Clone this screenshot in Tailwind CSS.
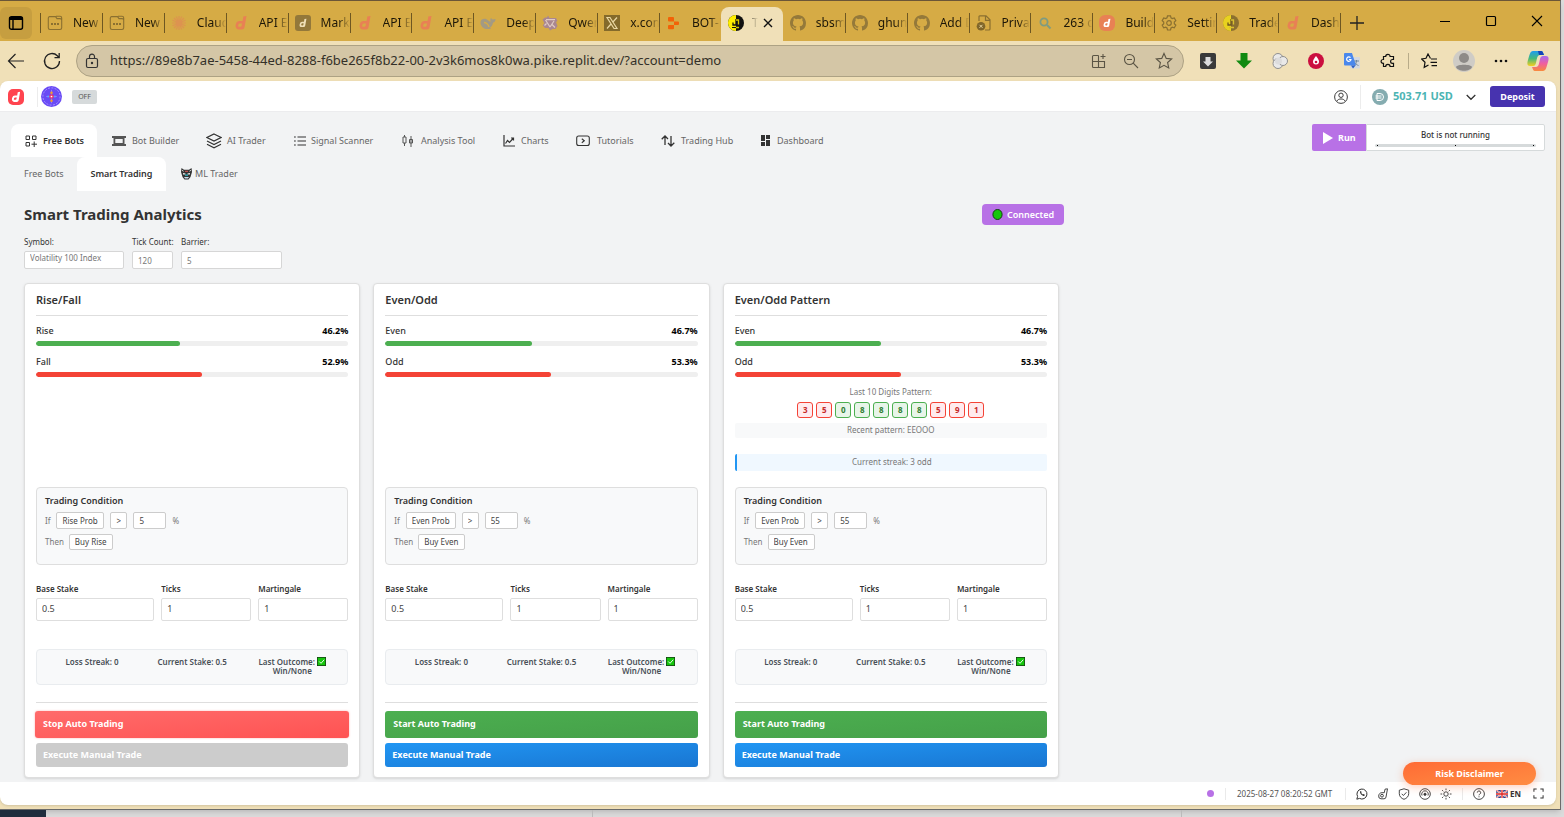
<!DOCTYPE html>
<html lang="en">
<head>
<meta charset="utf-8">
<title>Smart Trading Analytics</title>
<script src="https://cdn.jsdelivr.net/npm/@tailwindcss/browser@4"></script>
</head>
<body class="flex h-screen flex-col overflow-hidden bg-[#dcdcdc] pr-[3px] font-['Noto_Sans',sans-serif] text-[#333]">

<svg class="hidden">
  <symbol id="newtab" viewBox="0 0 16 16"><path d="M2.500 1.600h6l1.500 2h3a1.700 1.700 0 0 1 1.700 1.700v7.500a1.700 1.700 0 0 1-1.700 1.700H3a1.700 1.700 0 0 1-1.700-1.700V3A1.500 1.500 0 0 1 2.500 1.600zM9 1.300h4a1.700 1.700 0 0 1 1.700 1.700v3" fill="none" stroke="#8b7030" stroke-width="1.100"/><path d="M4 9h2M7 9h2M10 9h2" stroke="#8b7030" stroke-width="1.800"/></symbol>
  <symbol id="claude" viewBox="0 0 16 16"><path d="M8 1v14M1 8h14M3 3l10 10M13 3L3 13M5.300 1.500l5.400 13M10.700 1.500l-5.400 13M1.500 5.300l13 5.400M1.500 10.700l13-5.400" stroke="#dd9350" stroke-width="1.100"/></symbol>
  <symbol id="dglyph" viewBox="0 0 16 16"><path d="M13.500 1l-2 11.500a2.500 2.500 0 0 1-2.400 2H6a3.500 3.500 0 0 1-3.400-4.200l.3-1.300A3.800 3.800 0 0 1 6.600 6h3l.7-4.400zM9 8.500H7a1.800 1.800 0 0 0-1.700 1.400l-.1.600a1 1 0 0 0 1 1.300h1.300a1.200 1.200 0 0 0 1.100-1z" fill="currentColor" fill-rule="evenodd"/></symbol>
  <symbol id="dorange" viewBox="0 0 16 16"><use href="#dglyph" color="#e88154"/></symbol>
  <symbol id="dbrown" viewBox="0 0 16 16"><rect width="16" height="16" rx="3" fill="#93783a"/><use href="#dglyph" x="3" y="3" width="10" height="10" color="#f0e0b8"/></symbol>
  <symbol id="dround" viewBox="0 0 16 16"><rect width="16" height="16" rx="6" fill="#e88154"/><use href="#dglyph" x="3" y="3" width="10" height="10" color="#fff"/></symbol>
  <symbol id="dred" viewBox="0 0 16 16"><rect width="16" height="16" rx="5" fill="#ff444f"/><use href="#dglyph" x="2" y="2" width="12" height="12" color="#fff"/></symbol>
  <symbol id="whale" viewBox="0 0 16 16"><path d="M.5 7C1 4 4 3 6.500 4.200L9 6l1.500 1C10 5 10.500 3.500 11 3l1.500 1.500L15.500 4c0 2-1 3.500-2.500 3.800-.3 2-1.500 4-3 5l1 1.200H8C3.500 14.500.3 11 .5 7z" fill="#a39a83"/><path d="M4 7.500c2 0 4.500 2 5 4.500" stroke="#d6ab45" stroke-width="1.400" fill="none"/></symbol>
  <symbol id="qwen" viewBox="0 0 16 16"><path d="M6 .5l1.500 2.500H14l1.500 3-1.500 1 1.500 4-2 3h-3L8 15.500 6.500 13H3L.8 10.500 2.300 8 .5 4.500 3 2.500h2z" fill="#a98691"/><path d="M4 4.700h9M3.500 5l4.500 7M12 6l-4 6M2.500 10.500l2-2M10 9.500l3 3" stroke="#e0cbc4" stroke-width="1.200"/></symbol>
  <symbol id="xcom" viewBox="0 0 16 16"><path d="M0 0h16v16H0z" fill="#846a2b"/><path d="M3 2.500h3l7 11h-3zM13 2.500l-4.500 5M7 9l-4 4.500" fill="none" stroke="#ead7a2" stroke-width="1.200"/></symbol>
  <symbol id="replit" viewBox="0 0 16 16"><path d="M3 2h4a1 1 0 0 1 1 1v3.400H3a1 1 0 0 1-1-1V3a1 1 0 0 1 1-1zM8 6.400h4a1 1 0 0 1 1 1v1.500a1 1 0 0 1-1 1H8zM3 10h5v3.200a1 1 0 0 1-1 1H3a1 1 0 0 1-1-1V11a1 1 0 0 1 1-1z" fill="#f26207"/></symbol>
  <symbol id="yinyang" viewBox="0 0 16 16"><circle cx="8" cy="8" r="8" fill="#111"/><path d="M8 0a8 8 0 0 0 0 16z" fill="#ffef00"/><path d="M8 4v6H5V7.500" fill="none" stroke="#111" stroke-width="1.300"/><path d="M8 5h2.500v4.500M6 12.500h5" fill="none" stroke="#d9c900" stroke-width="1.300"/><path d="M4 12.500h4" stroke="#111"/></symbol>
  <symbol id="yinyang2" viewBox="0 0 16 16"><circle cx="8" cy="8" r="8" fill="#8b7030"/><path d="M8 0a8 8 0 0 0 0 16z" fill="#e8d21f"/><path d="M8 4v6H5V7.500" fill="none" stroke="#6d5620" stroke-width="1.300"/><path d="M8 5h2.500v4.500M6 12.500h5" fill="none" stroke="#d9c030" stroke-width="1.300"/></symbol>
  <symbol id="github" viewBox="0 0 16 16"><path d="M8 0C3.580 0 0 3.580 0 8c0 3.540 2.290 6.530 5.470 7.590.4.070.55-.17.55-.38v-1.490c-2.230.48-2.690-.95-2.690-.95-.36-.92-.89-1.170-.89-1.170-.73-.5.06-.49.06-.49.8.06 1.230.83 1.230.83.71 1.220 1.870.87 2.330.66.07-.51.28-.87.5-1.070-1.780-.2-3.640-.89-3.640-3.950 0-.87.310-1.590.82-2.150-.08-.2-.36-1.020.08-2.120 0 0 .67-.21 2.200.82a7.600 7.600 0 0 1 4 0c1.530-1.040 2.200-.82 2.200-.82.44 1.100.16 1.920.08 2.120.51.56.82 1.270.82 2.150 0 3.070-1.870 3.750-3.650 3.950.29.250.54.73.54 1.480v2.200c0 .21.15.46.55.38A8 8 0 0 0 16 8c0-4.420-3.580-8-8-8z" fill="#94793a"/></symbol>
  <symbol id="private" viewBox="0 0 16 16"><path d="M3 6V1.500A1 1 0 0 1 4 .8h6l4 4V14a1 1 0 0 1-1 1H9M9.500 1v4.300H14" fill="none" stroke="#8b7030" stroke-width="1.200"/><circle cx="5" cy="11.300" r="4.300" fill="#80662a"/><path d="M3.500 9.800l3 3M6.500 9.800l-3 3" stroke="#e8d6a0"/></symbol>
  <symbol id="mag" viewBox="0 0 16 16"><circle cx="7" cy="7" r="3.600" fill="none" stroke="#7f9b80" stroke-width="1.800"/><path d="M10 10l3.500 3.500" stroke="#7f9b80" stroke-width="2"/></symbol>
  <symbol id="gear" viewBox="0 0 16 16"><path d="M6.500.8h3l.5 2 1.300.8 2-.6 1.500 2.600-1.500 1.400v1.800l1.500 1.400-1.500 2.600-2-.6-1.300.8-.5 2h-3l-.5-2-1.300-.8-2 .6-1.500-2.600 1.500-1.400V7L1.200 5.600 2.700 3l2 .6L6 2.800z" fill="none" stroke="#8b7030" stroke-width="1.200"/><circle cx="8" cy="8" r="2.300" fill="none" stroke="#8b7030" stroke-width="1.200"/></symbol>
</svg>

<div class="flex min-h-0 flex-1 flex-col border-t border-r border-b border-[#6b6b6b] border-t-[#6b5637] bg-[#f0e0b8] shadow-md">
  <!-- tab strip -->
  <div class="flex h-10 shrink-0 bg-[#d6ab45] text-[12px] text-[#1d1708]">
    <button aria-label="Tab actions" class="mt-[6px] flex h-8 w-8 shrink-0 items-center justify-center rounded-md bg-[#c69e40]"><svg class="size-4" viewBox="0 0 16 16" fill="none" stroke="#000" stroke-width="1.400"><rect x="1.500" y="1.700" width="13" height="12.600" rx="2"/><path d="M1.500 3.500h13" stroke-width="3"/><path d="M5 4v10"/></svg></button>
    <div class="w-2 shrink-0"></div>
    <div id="tabs" class="grid min-w-0 flex-1 auto-cols-[minmax(0,1fr)] grid-flow-col"></div>
    <div class="flex w-[220px] shrink-0 items-center">
      <div class="mt-1 h-5 w-px bg-[#6e5722]"></div>
      <button aria-label="New tab" class="ml-[6px] mt-[3px]"><svg class="size-5" viewBox="0 0 20 20" stroke="#222" stroke-width="1.300"><path d="M3 10h14M10 3v14"/></svg></button>
      <div class="ml-auto flex items-center gap-[30px] pr-[15px]">
        <button aria-label="Minimize"><svg class="size-4" viewBox="0 0 16 16" stroke="#000" stroke-width="1"><path d="M3 8.500h10"/></svg></button>
        <button aria-label="Maximize"><svg class="size-4" viewBox="0 0 16 16" fill="none" stroke="#000" stroke-width="1.200"><rect x="3.500" y="3.500" width="9" height="9" rx="1"/></svg></button>
        <button aria-label="Close window"><svg class="size-4" viewBox="0 0 16 16" stroke="#000" stroke-width="1.100"><path d="M3 3l10 10M13 3L3 13"/></svg></button>
      </div>
    </div>
  </div>

  <!-- address row -->
  <div class="flex h-10 shrink-0 items-center">
    <button aria-label="Back" class="ml-1.5"><svg class="size-5" viewBox="0 0 20 20" fill="none" stroke="#222" stroke-width="1.200"><path d="M18 10H2.500M9.500 3l-7 7 7 7"/></svg></button>
    <button aria-label="Reload" class="ml-4"><svg class="size-5" viewBox="0 0 20 20" fill="none" stroke="#222" stroke-width="1.300"><path d="M17.500 10a7.500 7.500 0 1 1-2.200-5.300L17 6.500M17.200 2v4.700h-4.700"/></svg></button>
    <div class="ml-3.5 flex h-8 min-w-0 flex-1 items-center rounded-full border border-[#ada284] bg-[#d4c6a6] pr-2.5 pl-[7px]">
      <svg class="size-4" viewBox="0 0 16 16" fill="none" stroke="#333" stroke-width="1.200"><rect x="2.500" y="5.500" width="11" height="9" rx="1.500"/><path d="M5.500 5.500V3.600a2.500 2.500 0 0 1 5 0v1.900"/><circle cx="8" cy="10" r=".6" fill="#333"/></svg>
      <input aria-label="Address" value="https://89e8b7ae-5458-44ed-8288-f6be265f8b22-00-2v3k6mos8k0wa.pike.replit.dev/?account=demo" class="ml-2.5 min-w-0 flex-1 bg-transparent text-[13px] text-[#333028] outline-none">
      <div class="flex items-center gap-4 text-[#5b5545]">
        <svg class="size-4" viewBox="0 0 16 16" fill="none" stroke="currentColor" stroke-width="1.100"><path d="M7.500 2.500H2.500a1 1 0 0 0-1 1v10a1 1 0 0 0 1 1h11v-6h-12M7.500 2.500v12M12 1v5M9.500 3.500h5"/></svg>
        <svg class="size-4" viewBox="0 0 16 16" fill="none" stroke="currentColor" stroke-width="1.100"><circle cx="6.500" cy="6.500" r="5"/><path d="M10.200 10.200l4.800 4.800M4 6.500h5"/></svg>
        <svg class="size-[18px]" viewBox="0 0 16 16" fill="none" stroke="currentColor" stroke-width="1"><path d="M8 1.300l2 4.400 4.800.5-3.600 3.200 1 4.800L8 11.800l-4.200 2.400 1-4.800L1.200 6.200 6 5.700z"/></svg>
      </div>
    </div>
    <div class="ml-4 flex shrink-0 items-center gap-5">
      <svg class="size-4" viewBox="0 0 16 16"><rect width="16" height="16" rx="2" fill="#3a3a3a"/><path d="M5.500 4h5v4.500H13L8 13.500 3 8.500h2.500z" fill="#ddd"/></svg>
      <svg class="size-4" viewBox="0 0 16 16"><path d="M4.500 0h7v7.500H16l-8 8-8-8h4.500z" fill="#118a11"/></svg>
      <svg class="size-4" viewBox="0 0 16 16" stroke="#8f8f8f"><g fill="#e9e9e9"><circle cx="6" cy="5.500" r="5"/><circle cx="6" cy="10.500" r="5"/><circle cx="11" cy="8" r="4.500"/></g><circle cx="6.500" cy="8" r="3.500" fill="#dcdcdc" stroke="none"/></svg>
      <svg class="size-4" viewBox="0 0 16 16"><circle cx="8" cy="8" r="8" fill="#cb0f3f"/><path d="M8 3c2 2.500 3 4 3 5.600a3 3 0 0 1-6 0C5 7 6 5.500 8 3z" fill="#fff"/><circle cx="8" cy="9" r="1.300" fill="#cb0f3f"/></svg>
      <svg class="size-4" viewBox="0 0 16 16"><rect x="6" y="4" width="10" height="11.500" rx="1" fill="#d5d9de"/><path d="M10 8h5M12.500 7v1c0 2-1 3.500-2.500 4.500M11 9.500c.5 1.500 2 2.500 3.500 3" stroke="#70889e" fill="none"/><path d="M1 0h7l4 12.500H1a1 1 0 0 1-1-1V1a1 1 0 0 1 1-1z" fill="#4a88ec"/><path d="M7 12.500h4.500L9 15.500z" fill="#2c5fc4"/><path d="M6.500 4.700A2.200 2.200 0 1 0 7 6.500H5" fill="none" stroke="#fff" stroke-width="1.200"/></svg>
      <svg class="size-4" viewBox="0 0 16 16" fill="none" stroke="#111" stroke-width="1.200"><path d="M3.500 3.500h2.200a2.200 2.200 0 0 1 4.400 0h3.400v3h-1a1.900 1.900 0 0 0 0 3.800h1v3.200h-3.400a2.200 2.200 0 0 0-4.400 0H3.500v-3.200H3a1.900 1.900 0 0 1 0-3.800h.5z"/></svg>
    </div>
    <div class="mx-3 h-4 w-px bg-[#b8ab89]"></div>
    <div class="flex shrink-0 items-center gap-4 pr-[11px]">
      <svg class="size-4" viewBox="0 0 16 16" fill="none" stroke="#111" stroke-width="1.200"><path d="M9.500 5.500L7 1 5 5.300.7 6 4 9.300l-.8 5L7.500 12M10 6h6M9.500 9.300H16M10.500 12.600H16"/></svg>
      <svg class="size-[22px]" viewBox="0 0 22 22"><circle cx="11" cy="11" r="11" fill="#cfccc6"/><circle cx="11" cy="8" r="5" fill="#8e8b88"/><path d="M3 17c1-3 15-3 16 0-2 5-14 5-16 0z" fill="#8e8b88"/></svg>
      <svg class="mx-0.5 size-4" viewBox="0 0 16 16" fill="#111"><circle cx="3" cy="8" r="1.300"/><circle cx="8" cy="8" r="1.300"/><circle cx="13" cy="8" r="1.300"/></svg>
      <svg class="size-[22px]" viewBox="0 0 22 22"><defs><linearGradient id="cg" x1="0" y1="0" x2="0" y2="1"><stop offset="0" stop-color="#1f9cf0"/><stop offset=".5" stop-color="#45b97c"/><stop offset="1" stop-color="#f5cf1d"/></linearGradient><linearGradient id="ch" x1="0" y1="0" x2="0" y2="1"><stop offset="0" stop-color="#a66cf0"/><stop offset=".5" stop-color="#ef5fa0"/><stop offset="1" stop-color="#f98a3c"/></linearGradient></defs><path d="M6 1h8c2 0 2 2 3 4h-4c-3 0-3 4-4 8-1 3-2 3-4 3H3c-3 0-3-3-2-6C2.500 5 3 1 6 1z" fill="url(#cg)"/><path d="M11 1h3c2 0 2 2 3 4h-5z" fill="#1544b8"/><path d="M16 21H8c-2 0-2-2-3-4h4c3 0 3-4 4-8 1-3 2-3 4-3h2c3 0 3 3 2 6-1.500 5-2 9-5 9z" fill="url(#ch)"/></svg>
    </div>
  </div>

  <!-- page -->
  <div class="mr-1 mb-1 flex min-h-0 flex-1 flex-col overflow-hidden rounded-lg bg-white shadow">
    <header class="flex h-[31px] shrink-0 items-center border-b border-[#ececee] pt-px pr-[11px] pl-2">
      <svg class="size-4"><use href="#dred"/></svg>
      <div class="mr-[3px] ml-[13px] h-5 w-px bg-[#ececec]"></div>
      <svg class="size-[21px]" viewBox="0 0 22 22"><circle cx="11" cy="11" r="11" fill="#6a4bf5"/><circle cx="11" cy="11" r="9" fill="none" stroke="#b5a8ff" stroke-dasharray="2 1.500" stroke-width=".8"/><path d="M11 4v14M5.500 11h11" stroke="#9c8cff" stroke-width=".8"/><circle cx="11" cy="7" r="1.300" fill="#f59b2b"/><circle cx="11" cy="15.500" r="1.300" fill="#f59b2b"/><circle cx="7.500" cy="11" r="1" fill="#55a9ff"/><circle cx="14.500" cy="11" r="1" fill="#55a9ff"/><circle cx="11" cy="11" r="2.300" fill="#e9376f"/><circle cx="11" cy="11" r=".9" fill="#fff"/></svg>
      <button class="ml-2.5 h-3.5 w-[25px] rounded-xs bg-[#d6dadb] text-[7px] leading-none text-[#555]">OFF</button>
      <div class="ml-auto flex items-center">
        <svg class="size-3.5" viewBox="0 0 16 16" fill="none" stroke="#333" stroke-width="1.100"><circle cx="8" cy="8" r="7.300"/><circle cx="8" cy="6" r="2.500"/><path d="M3.500 12.500c1-3 8-3 9 0"/></svg>
        <div class="mr-[11px] ml-3 h-6 w-px bg-[#ececec]"></div>
        <svg class="size-4" viewBox="0 0 16 16"><circle cx="8" cy="8" r="8" fill="#85acb0"/><path d="M5 4.500h3a3.500 3.500 0 0 1 0 7H5zM3.500 7h6M3.500 9h6" fill="none" stroke="#fff" stroke-width="1"/></svg>
        <span class="ml-[5px] w-[61px] text-[11px] font-bold whitespace-nowrap text-[#4bb4b3]">503.71 USD</span>
        <button aria-label="Accounts" class="mx-3"><svg class="size-2.5" viewBox="0 0 10 10" fill="none" stroke="#333" stroke-width="1.300"><path d="M.7 3L5 7.300 9.300 3"/></svg></button>
        <button class="ml-0.5 h-[21px] w-[55px] rounded-[3px] bg-[#4733af] text-[9px] font-bold text-white">Deposit</button>
      </div>
    </header>

    <main class="flex min-h-0 flex-1 flex-col overflow-hidden bg-[#f2f3f4] pt-3 text-[9px]">
      <div class="flex shrink-0 items-start pr-[11px] pl-[11px]">
        <nav class="flex flex-1">
          <a href="#" class="flex h-[33px] w-[86px] items-center gap-[6px] rounded-t-lg bg-white pl-3.5 font-semibold whitespace-nowrap"><svg class="size-3" viewBox="0 0 12 12" fill="none" stroke="#333" stroke-width="1"><path d="M1 1h3.500v3.500H1zM7.500 1H11v3.500H7.500zM1 7.500h3.500V11H1zM9.200 6.500V12M6.500 9.200H12"/></svg>Free Bots</a>
          <a href="#" class="flex h-[33px] w-[96px] items-center gap-[6px] pl-[15px] whitespace-nowrap text-[#666]"><svg class="h-3 w-3.5" viewBox="0 0 14 12" fill="#555"><path d="M0 1h14v2h-1.500v6H14v2H0V9h1.500V3H0zm3.300 3v4h7.400V4z" fill-rule="evenodd"/></svg>Bot Builder</a>
          <a href="#" class="flex h-[33px] w-[87px] items-center gap-[5px] pl-[13px] whitespace-nowrap text-[#666]"><svg class="size-4" viewBox="0 0 16 16" fill="none" stroke="#333" stroke-width="1.200"><path d="M8 1l7 3.500L8 8 1 4.500zM1 8l7 3.500L15 8M1 11.300l7 3.500 7-3.500"/></svg>AI Trader</a>
          <a href="#" class="flex h-[33px] w-[108px] items-center gap-[5px] pl-3.5 whitespace-nowrap text-[#666]"><svg class="size-3" viewBox="0 0 12 12" stroke="#333" stroke-width="1.200"><path d="M0 2h1.800M0 6h1.800M0 10h1.800M3.500 2H12M3.500 6H12M3.500 10H12"/></svg>Signal Scanner</a>
          <a href="#" class="flex h-[33px] w-[101px] items-center gap-[7px] pl-3.5 whitespace-nowrap text-[#666]"><svg class="size-3" viewBox="0 0 12 12" fill="none" stroke="#555" stroke-width="1"><path d="M2.500 0v2M2.500 8v3M1 2h3v6H1zM9 1v3M9 8v4M7.500 4.500h3v3.500h-3zM9 4v4"/></svg>Analysis Tool</a>
          <a href="#" class="flex h-[33px] w-[73px] items-center gap-[6px] pl-3.5 whitespace-nowrap text-[#666]"><svg class="size-3" viewBox="0 0 12 12" fill="none" stroke="#333" stroke-width="1.200"><path d="M1 0v11h11M2.500 8.500l2-3 2 2L10.500 3M8 3h2.500v2.500"/></svg>Charts</a>
          <a href="#" class="flex h-[33px] w-[85px] items-center gap-[7px] pl-3.5 whitespace-nowrap text-[#666]"><svg class="h-3 w-3.5" viewBox="0 0 14 12" fill="none" stroke="#333" stroke-width="1.100"><rect x=".7" y="1" width="12.600" height="9.500" rx="2"/><path d="M5.800 3.800L8.300 5.700 5.800 7.700" /></svg>Tutorials</a>
          <a href="#" class="flex h-[33px] w-[100px] items-center gap-[6px] pl-3.5 whitespace-nowrap text-[#666]"><svg class="h-3 w-3.5" viewBox="0 0 14 12" fill="none" stroke="#333" stroke-width="1.300"><path d="M4 10V1M.7 4.200L4 1l3 3M10 1v10M7 8l3 3 3.300-3.200"/></svg>Trading Hub</a>
          <a href="#" class="flex h-[33px] w-[90px] items-center gap-[6px] pl-[13px] whitespace-nowrap text-[#666]"><svg class="size-[11px]" viewBox="0 0 11 11" fill="#333"><path d="M1 0h4v6H1zM1 7h4v4H1zM6 0h4v4H6zM6 5h4v6H6z"/></svg>Dashboard</a>
        </nav>
        <div class="flex h-[27px] w-[233px]">
          <button class="flex w-[54px] items-center gap-[5px] rounded-l-xs bg-[#b871e6] pl-[11px] font-bold text-white"><svg class="h-3 w-2.5" viewBox="0 0 10 12" fill="#fff"><path d="M0 0l10 6-10 6z"/></svg>Run</button>
          <div class="flex flex-1 flex-col items-center rounded-r-xs border border-[#d6dadb] bg-white px-2 pt-[3px] text-[8px] font-medium">
            <span class="leading-[14px]">Bot is not running</span>
            <div class="mt-0.5 flex h-[3px] w-full items-center justify-between rounded-full bg-[#d6dadb] px-0.5"><i class="size-px bg-black"></i><i class="size-px bg-black"></i><i class="size-px bg-black"></i></div>
          </div>
        </div>
      </div>

      <nav class="flex h-[34px] shrink-0 pl-6 text-[#666]">
        <a href="#" class="flex w-[53px] items-center">Free Bots</a>
        <a href="#" class="flex w-[89px] items-center justify-center rounded-t-lg bg-white font-semibold text-[#333]">Smart Trading</a>
        <a href="#" class="flex items-center gap-[3px] pl-[15px]"><svg class="h-3 w-[11px]" viewBox="0 0 11 12"><path d="M.5 0L3 1.700h5L10.500 0 11 4 9.500 9l-2 2.500h-4L1.500 9 0 4z" fill="#333"/><path d="M1.300 2l1 1.500M9.700 2l-1 1.500" stroke="#ddd"/><path d="M2 5l2.500.5v1L2 6.500zM9 5l-2.500.5v1L9 6.500z" fill="#eee"/><path d="M4 3.300h3" stroke="#e05050"/><path d="M4 6.500h3v1.300H4z" fill="#2bb5c4"/><path d="M3 9h5l-1 1.500H4z" fill="#cde"/></svg>ML Trader</a>
      </nav>

      <div class="w-[1064px] max-w-full pl-6">
        <div class="mt-[13px] flex h-[21px] items-center justify-between">
          <h1 class="text-[15px] font-bold whitespace-nowrap">Smart Trading Analytics</h1>
          <span class="flex h-[21px] w-[82px] items-center justify-center gap-1 rounded bg-[#b871e6] font-semibold text-white"><svg class="size-[11px]" viewBox="0 0 11 11"><ellipse cx="5.500" cy="5.500" rx="4.600" ry="5" fill="#16c60c" stroke="#143d12"/></svg>Connected</span>
        </div>
        <div class="mt-3 flex gap-2 text-[8px]">
          <div class="w-[100px]"><label for="sym" class="block h-3.5 leading-[10px]">Symbol:</label><select id="sym" class="block h-[18px] w-full appearance-none rounded-xs border border-[#d6d6d6] bg-white px-[5px] pb-1 text-[#777]"><option>Volatility 100 Index</option></select></div>
          <div class="w-[41px]"><label for="tc" class="block h-3.5 leading-[10px] whitespace-nowrap">Tick Count:</label><input id="tc" value="120" class="block h-[18px] w-full rounded-xs border border-[#d6d6d6] bg-white px-[5px] text-[#777]"></div>
          <div class="w-[101px]"><label for="bar" class="block h-3.5 leading-[10px]">Barrier:</label><input id="bar" value="5" class="block h-[18px] w-full rounded-xs border border-[#d6d6d6] bg-white px-[5px] text-[#777]"></div>
        </div>
      </div>
      <div id="cards" class="mt-3.5 grid w-[1059px] max-w-full shrink-0 grid-cols-3 gap-[13px] pl-6"></div>
    </main>

    <footer class="relative flex h-[23px] shrink-0 items-center justify-end pr-3 text-[8px] text-[#555]">
      <button class="absolute right-5 bottom-5 h-[23px] w-[133px] rounded-full bg-linear-to-br from-[#ff6b35] to-[#ff8c42] text-[9px] font-bold text-white shadow-[0_2px_8px_#ff6b3555]">Risk Disclaimer</button>
      <i class="size-[7px] rounded-full bg-[#b871e6]"></i>
      <div class="mx-[11px] h-3 w-px bg-[#eaeaea]"></div>
      <span class="w-[98px] whitespace-nowrap">2025-08-27 08:20:52 GMT</span>
      <div class="mx-2.5 h-3 w-px bg-[#eaeaea]"></div>
      <div class="flex items-center gap-[9px]">
        <svg class="size-3" viewBox="0 0 12 12" fill="none" stroke="#333"><path d="M.8 11.200l.8-2.700A5 5 0 1 1 3.500 10.400z"/><path d="M4 3.500c-.3 2 2 4.500 4.300 4.500l.5-1.300-1.300-.6-.7.500L5.200 5l.4-.7-.6-1.200z" fill="#333" stroke="none"/></svg>
        <svg class="size-3" viewBox="0 0 12 12" fill="none" stroke="#333" stroke-width=".9"><path d="M10.500.8L9 9a2 2 0 0 1-2 1.800H4A2.500 2.500 0 0 1 1.700 8C1.800 6 3 4.700 5 4.700h2.300L8 1.200z"/><circle cx="5" cy="7.700" r="1.400"/></svg>
        <svg class="size-3" viewBox="0 0 12 12" fill="none" stroke="#333" stroke-width=".9"><path d="M6 .8l4.700 1.400v3.500C10.700 8.500 8.500 10.500 6 11.300 3.500 10.500 1.300 8.500 1.300 5.700V2.200zM3.700 5.800l1.700 1.700 3-3.200"/></svg>
        <svg class="size-3" viewBox="0 0 12 12" fill="none" stroke="#333" stroke-width=".9"><circle cx="6" cy="6" r="5.300"/><path d="M3 7.500a3.300 3.300 0 1 1 6 0"/><circle cx="6" cy="6.300" r="1.100" fill="#333"/></svg>
        <svg class="size-3" viewBox="0 0 12 12" fill="none" stroke="#333" stroke-width=".9"><circle cx="6" cy="6" r="2.200"/><path d="M6 .5v1.700M6 9.800v1.700M.5 6h1.700M9.800 6h1.700M2.100 2.100l1.200 1.200M8.700 8.700l1.200 1.200M9.900 2.100L8.700 3.300M3.300 8.700L2.100 9.900"/></svg>
      </div>
      <div class="mx-2.5 h-3 w-px bg-[#eaeaea]"></div>
      <svg class="size-3" viewBox="0 0 12 12" fill="none" stroke="#333" stroke-width=".9"><circle cx="6" cy="6" r="5.400"/><path d="M4.300 4.600a1.700 1.700 0 1 1 2.400 1.600c-.5.200-.7.500-.7 1.100M6 8.300v1"/></svg>
      <svg class="ml-[11px] h-2 w-3" viewBox="0 0 12 8"><path d="M0 0h12v8H0z" fill="#26408f"/><path d="M0 0l12 8M12 0L0 8" stroke="#fff" stroke-width="1.500"/><path d="M0 0l12 8M12 0L0 8" stroke="#d22" stroke-width=".6"/><path d="M6 0v8M0 4h12" stroke="#fff" stroke-width="2.400"/><path d="M6 0v8M0 4h12" stroke="#d22" stroke-width="1.300"/></svg>
      <span class="ml-0.5 w-3 font-bold text-[#333]">EN</span>
      <button aria-label="Full screen" class="ml-[11px]"><svg class="size-[11px]" viewBox="0 0 12 12" fill="none" stroke="#333" stroke-width="1.100"><path d="M1 4V1h3M8 1h3v3M11 8v3H8M4 11H1V8"/></svg></button>
    </footer>
  </div>
</div>
<!-- strip under the window -->
<div class="flex h-[7px] shrink-0"><div class="w-[46px] bg-[#1f2d3d]"></div><div class="w-[547px] border-r border-[#bbb]"></div><div class="w-[589px] border-r border-[#bbb]"></div></div>

<script>
const tabs = [['newtab','New tab'],['newtab','New tab'],['claude','Claude'],['dorange','API Ex'],['dbrown','Market'],['dorange','API Ex'],['dorange','API Ex'],['whale','Deep'],['qwen','Qwen'],['xcom','x.com'],['replit','BOT-N'],['yinyang','T'],['github','sbsmith'],['github','ghunt'],['github','Add D'],['private','Privacy'],['mag','263 ch'],['dround','Build'],['gear','Settings'],['yinyang2','Trade'],['dorange','Dashb']];
document.getElementById('tabs').innerHTML = tabs.map(([icon, text], i) => i === 11
  ? `<div class="mt-[6px] flex min-w-0 items-center rounded-t-lg bg-[#f0e0b8] pb-0.5 pl-[7px]"><svg class="size-4 shrink-0"><use href="#${icon}"/></svg><span class="ml-2 w-1.5 overflow-hidden text-[#887f66] [mask-image:linear-gradient(90deg,#000,transparent)]">${text}</span><button aria-label="Close tab" class="ml-1"><svg class="size-3" viewBox="0 0 12 12" stroke="#111" stroke-width="1.400"><path d="M2 2l8 8M10 2l-8 8"/></svg></button></div>`
  : `<div class="flex min-w-0 items-center pt-1"><div class="h-5 w-px shrink-0 ${i === 12 ? 'bg-transparent' : 'bg-[#6e5722]'}"></div><svg class="ml-[6px] size-4 shrink-0"><use href="#${icon}"/></svg><span class="ml-[10px] min-w-0 flex-1 overflow-hidden whitespace-nowrap [mask-image:linear-gradient(90deg,#000_60%,transparent)]">${text}</span></div>`).join('');

const digits = [3,5,0,8,8,8,8,5,9,1];
const cards = [
  {id:'rf', t:'Rise/Fall', a:'Rise', b:'Fall', pa:'46.2%', pb:'52.9%', wa:46.2, v:'5', on:true},
  {id:'eo', t:'Even/Odd', a:'Even', b:'Odd', pa:'46.7%', pb:'53.3%', wa:47, v:'55'},
  {id:'ep', t:'Even/Odd Pattern', a:'Even', b:'Odd', pa:'46.7%', pb:'53.3%', wa:47, v:'55', pattern:true}];
const bar = (l, p, w, c) => `<div class="flex h-3 items-center justify-between font-medium"><span>${l}</span><b class="text-black">${p}</b></div><div class="mt-1 mb-[10px] h-[5px] overflow-hidden rounded-full bg-[#efefef]"><div class="h-full rounded-full ${c}" style="width:${w}%"></div></div>`;
document.getElementById('cards').innerHTML = cards.map(c => `
<section class="flex h-[495px] flex-col rounded border border-[#dedede] bg-white px-[11px] shadow-sm">
  <h2 class="h-8 border-b border-[#dedede] text-[11px] leading-8 font-semibold">${c.t}</h2>
  <div class="mt-[9px] h-[162px] shrink-0">
    ${bar(c.a, c.pa, c.wa, 'bg-[#4caf50]')}${bar(c.b, c.pb, 53.2, 'bg-[#f44336]')}
    ${c.pattern ? `<div class="text-center text-[8px] leading-[10px] text-[#777]">Last 10 Digits Pattern:</div>
    <div class="mt-[5px] flex justify-center gap-[3px]">${digits.map(d => d % 2 ? `<span class="flex h-4 w-4 items-center justify-center rounded-[3px] border border-[#f44336] bg-[#ffebee] text-[8px] font-bold text-[#c62828]">${d}</span>` : `<span class="flex h-4 w-4 items-center justify-center rounded-[3px] border border-[#4caf50] bg-[#e8f5e9] text-[8px] font-bold text-[#2e7d32]">${d}</span>`).join('')}</div>
    <div class="mt-[5px] h-[15px] rounded-xs bg-[#f8f9fa] text-center text-[8px] leading-[14px] text-[#777]">Recent pattern: EEOOO</div>
    <div class="mt-4 h-[17px] rounded-xs border-l-2 border-[#2196f3] bg-[#f0f8ff] text-center text-[8px] leading-4 text-[#777]">Current streak: 3 odd</div>` : ''}
  </div>
  <div class="h-[78px] shrink-0 rounded border border-[#dedede] bg-[#f8f9fa] px-2 pt-[7px] text-[8px] text-[#777]">
    <h3 class="h-[17px] text-[9px] leading-3 font-semibold text-[#333]">Trading Condition</h3>
    <div class="flex h-[17px] items-center gap-[6px]"><span>If</span><select aria-label="Condition" class="h-[17px] appearance-none rounded-xs border border-[#ccc] bg-white px-[5px] text-[#444]"><option>${c.a} Prob</option></select><select aria-label="Operator" class="h-[17px] w-[17px] appearance-none rounded-xs border border-[#ccc] bg-white px-[5px] text-[#444]"><option>&gt;</option></select><input aria-label="Threshold" value="${c.v}" class="h-[17px] w-[33px] rounded-xs border border-[#ccc] bg-white px-[5px] text-[#444]"><span>%</span></div>
    <div class="mt-[5px] flex h-4 items-center gap-[5px]"><span>Then</span><select aria-label="Action" class="h-4 appearance-none rounded-xs border border-[#ccc] bg-white px-[5px] text-[#444]"><option>Buy ${c.a}</option></select></div>
  </div>
  <div class="mt-[18px] grid shrink-0 grid-cols-[118fr_90fr_90fr] gap-[7px]">
    ${[['Base Stake','0.5'],['Ticks','1'],['Martingale','1']].map(([l, v], i) => `<div class="min-w-0"><label for="${c.id}${i}" class="block h-[15px] text-[8px] leading-3 font-semibold">${l}</label><input id="${c.id}${i}" value="${v}" class="block h-[23px] w-full rounded-xs border border-[#dedede] bg-white px-[5px] pb-0.5 text-[9px] text-[#444]"></div>`).join('')}
  </div>
  <div class="mt-7 grid h-9 shrink-0 grid-cols-3 rounded border border-[#e9ecef] bg-[#f8f9fa] px-[5px] pt-[7px] text-center text-[8px] leading-[9px] font-semibold text-[#495057]">
    <span>Loss Streak: 0</span><span>Current Stake: 0.5</span><span>Last Outcome: <svg class="inline size-[9px] align-[-1px]" viewBox="0 0 10 10"><rect x=".5" y=".5" width="9" height="9" fill="#16c60c" stroke="#0d4f0a"/><path d="M2.500 5l2 2L8 3" stroke="#fff" fill="none"/></svg><br>Win/None</span>
  </div>
  <div class="mt-[17px] h-px shrink-0 bg-[#dedede]"></div>
  ${c.on ? `<button class="-mx-px mt-2 h-[27px] shrink-0 rounded-[3px] bg-linear-to-br from-[#ff6b6b] to-[#ff5252] px-2 pb-0.5 text-left font-bold text-white shadow-[0_0_2px_#ff525280]">Stop Auto Trading</button><button disabled class="mt-[5px] h-6 shrink-0 rounded-[3px] bg-[#ccc] px-[7px] text-left font-bold text-white">Execute Manual Trade</button>`
  : `<button class="mt-2 h-[27px] shrink-0 rounded-[3px] bg-linear-to-br from-[#4caf50] to-[#45a049] px-2 pb-0.5 text-left font-bold text-white">Start Auto Trading</button><button class="mt-[5px] h-6 shrink-0 rounded-[3px] bg-linear-to-br from-[#2196f3] to-[#1976d2] px-[7px] text-left font-bold text-white">Execute Manual Trade</button>`}
</section>`).join('');
</script>
</body>
</html>
